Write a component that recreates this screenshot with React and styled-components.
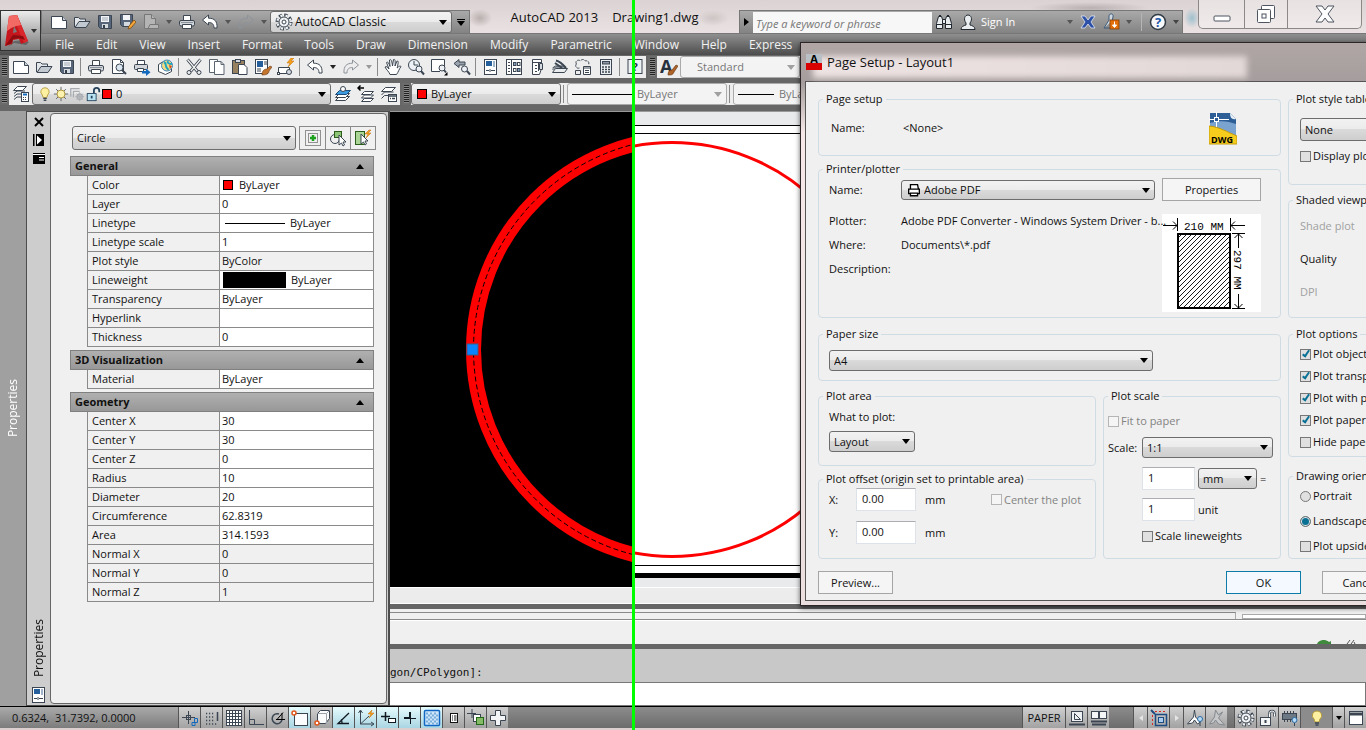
import React from "react";
import styled, { createGlobalStyle, css } from "styled-components";

const ink = "#3b4652";

/* every toolbar drawing sits on an 18 x 18 grid */
const glyphs = {
  page: (
    <g fill="#fff" stroke={ink}>
      <path d="M1.500 3.500h11l4 4v8h-15z" />
      <path d="M12.500 3.500v4h4" fill="#c9ced6" />
    </g>
  ),
  open: (
    <g stroke={ink} strokeLinejoin="round">
      <path d="M1.500 14V4.500h4l1.500 1.500h5.500v3" fill="#e4e7ea" />
      <path d="M2 14.500l4-6h11l-4 6z" fill="#c3c9d0" />
    </g>
  ),
  save: (
    <g>
      <path d="M2.500 2.500h13v13h-11l-2-2z" fill="#56657a" stroke={ink} />
      <rect x="5" y="3" width="8" height="6" fill="#f2f4f7" />
      <path d="M6 5h6M6 7h6" stroke="#9fa8b3" />
      <rect x="6" y="11" width="6" height="4" fill="#d5dae1" />
      <rect x="7" y="12" width="2" height="3" fill="#333c49" />
    </g>
  ),
  saveAs: (
    <g>
      <path d="M1.500 1.500h12v12h-10l-2-2z" fill="#56657a" stroke={ink} />
      <rect x="4" y="2" width="7" height="5" fill="#f2f4f7" />
      <rect x="5" y="9" width="6" height="4" fill="#d5dae1" />
      <path d="M9 16l1-3 5-6 2 2-5 6z" fill="#f6a73b" stroke="#7d4d10" strokeWidth=".8" />
    </g>
  ),
  plotPage: (
    <g fill="#b4b4b4" stroke="#777">
      <path d="M2.500 1.500h7l4 4v10h-11z" />
      <path d="M9.500 1.500v4h4" />
      <path d="M8 11.500h8.500v4H6z" />
    </g>
  ),
  print: (
    <g stroke={ink}>
      <path d="M5.500 7.500v-5h7v5" fill="#fff" />
      <rect x="1.500" y="7.500" width="15" height="5.500" rx="1.500" fill="#d2d6da" />
      <path d="M4.500 11.500h9v4h-9z" fill="#fff" />
      <path d="M3 9.500h12" stroke="#8b939c" />
    </g>
  ),
  printCheck: (
    <g stroke={ink}>
      <path d="M2.500 1.500h8l3 3v11h-11z" fill="#fff" />
      <path d="M10.500 1.500v3h3" fill="none" />
      <circle cx="9.500" cy="9.500" r="3.500" fill="#dbe7f0" />
      <path d="M12 12l4 4" strokeWidth="2" />
    </g>
  ),
  publish: (
    <g stroke={ink}>
      <path d="M4.500 6V2.500h7V6" fill="#fff" />
      <rect x="1.500" y="6.500" width="13" height="5" rx="1" fill="#d2d6da" />
      <path d="M4.500 10.500h6v3h-6z" fill="#fff" />
      <path d="M9 13h4v-2.500l4.500 3.800-4.500 3.700v-2.500H9z" fill="#1269bd" stroke="none" />
    </g>
  ),
  globe: (
    <g>
      <path d="M2.500 6.500l5-3 8 2v8l-6 3-7-3z" fill="#fff" stroke={ink} />
      <circle cx="11" cy="7.500" r="5.500" fill="#f2d982" stroke="#3d86b9" />
      <path d="M8 4c2 1 2 2 2 4s2 2 2 4M12 3c-1 2 1 3 4 3" fill="none" stroke="#1fa5c0" strokeWidth="2" />
      <path d="M13 7l3 1-2 3z" fill="#d9431e" />
    </g>
  ),
  cut: (
    <g stroke={ink} fill="none">
      <path d="M2.500 1.500l10 12M15.500 1.500l-10 12" strokeWidth="3" />
      <path d="M2.500 1.500l10 12M15.500 1.500l-10 12" stroke="#f4f4f4" strokeWidth="1.200" />
      <circle cx="4" cy="14.500" r="2" />
      <circle cx="14" cy="14.500" r="2" />
    </g>
  ),
  copy: (
    <g fill="#fff" stroke="#5a6570">
      <path d="M1.500 1.500h8v13h-8z" />
      <path d="M6.500 3.500h6.500l3 3v10H6.500z" />
      <path d="M13 3.500v3h3" fill="none" />
    </g>
  ),
  paste: (
    <g stroke={ink}>
      <rect x="1.500" y="2.500" width="12" height="13" fill="#97815f" />
      <rect x="4.500" y="1.500" width="5" height="3" fill="#d6d9dd" />
      <path d="M7.500 6.500h5.500l3 3v7H7.500z" fill="#fff" />
    </g>
  ),
  match: (
    <g>
      <rect x="1.500" y="1.500" width="12" height="14" fill="#fff" stroke={ink} />
      <rect x="3" y="3" width="6" height="6" fill="#245f9c" />
      <path d="M10 4h3M10 6h3M3 11h4M3 13h4" stroke={ink} />
      <path d="M8 17c0-4 2-6 5-6l3-3 2 1-3 4c0 3-3 4-7 4z" fill="#c3752e" stroke="#6c3a12" strokeWidth=".6" />
    </g>
  ),
  blockEdit: (
    <g stroke={ink}>
      <path d="M1.500 15.500v-6h11v6z" fill="#fff" />
      <circle cx="12" cy="14" r="2.500" fill="#d5dae1" />
      <rect x="0.500" y="14.500" width="2" height="2" fill="#fff" />
      <path d="M14 0l-4 5h3l-2 4 6-6h-3l3-3z" fill="#f6a01e" stroke="#c06f08" strokeWidth=".5" />
    </g>
  ),
  undo: (
    <path d="M1.500 7l6-5v3.200c6 0 9 3 8.500 9.800h-3c0-4-2-5.500-5.500-5.500V12z" fill="#fff" stroke={ink} strokeLinejoin="round" />
  ),
  redo: (
    <path d="M16.500 7l-6-5v3.200c-6 0-9 3-8.500 9.800h3c0-4 2-5.500 5.500-5.500V12z" fill="none" stroke="#8e949b" strokeLinejoin="round" />
  ),
  hand: (
    <path
      d="M6 16.500c-1-3-3.500-4.500-5-7.500 1.500-1 2.500 0 4 2L2.500 4.500c1-1 2-.5 3.500 4L5.500 2c1.200-1 2.200-.5 3 6l1-6.500c1.500-.5 2 .5 1.500 6.500l2-5c1.500-.2 1.500 1 .2 7 1.800-2 2.800-2.200 3.800-1.500-2 2.500-2.500 5.500-4.500 8z"
      fill="#fff" stroke={ink} strokeLinejoin="round"
    />
  ),
  zoomLive: (
    <g stroke={ink} fill="#eef2f6">
      <circle cx="7" cy="7" r="5.500" />
      <path d="M7 3v4h4" fill="none" />
      <circle cx="12" cy="11" r="3" />
      <path d="M14 13l3 3.500" strokeWidth="2" />
    </g>
  ),
  zoomWindow: (
    <g stroke={ink}>
      <path d="M10 13.500H1.500v-12h13V8" fill="#fff" />
      <circle cx="12" cy="10" r="3" fill="#eef2f6" />
      <path d="M14 12l2 2.500" strokeWidth="2" />
      <path d="M17.500 14v3.500H14z" fill="#000" stroke="none" />
    </g>
  ),
  zoomPrev: (
    <g stroke={ink}>
      <path d="M1 5.500l5-4v2.500h6v3H6v2.500z" fill="#9aa3ad" />
      <circle cx="11.500" cy="11" r="3" fill="#eef2f6" />
      <path d="M14 13l3 3.500" strokeWidth="2" />
    </g>
  ),
  props: (
    <g>
      <rect x="2.500" y="1.500" width="12" height="15" fill="#fff" stroke={ink} />
      <rect x="4" y="3" width="6" height="5" fill="#245f9c" />
      <path d="M12 3v6" stroke="#9fb4c8" strokeWidth="2" />
      <path d="M4 12.500h3M9 12.500h4M8 11v3" stroke={ink} />
    </g>
  ),
  designCenter: (
    <g fill="#fff" stroke={ink}>
      <rect x="1.500" y="1.500" width="15" height="15" />
      <path d="M6.500 1.500v15M3 4.500h2M3 7.500h2M3 10.500h2M3 13.500h2" />
      <rect x="8.500" y="4.500" width="2.500" height="3" fill="#7ea0c0" />
      <rect x="12.500" y="4.500" width="2.500" height="3" />
      <rect x="8.500" y="10.500" width="2.500" height="3" />
      <rect x="12.500" y="10.500" width="2.500" height="3" fill="#7ea0c0" />
    </g>
  ),
  toolPalette: (
    <g fill="#fff" stroke={ink}>
      <path d="M4.500 1.500h9v9l-2 6h-7z" />
      <path d="M4.500 4.500h9M10.500 5v8M7 7.500h2M7 10.500h2M7 13.500h2" />
      <path d="M11.500 5.500h3v6h-3z" fill="#d5dae1" />
    </g>
  ),
  sheetSet: (
    <g stroke={ink} fill="#e9ecef" strokeLinejoin="round">
      <path d="M1.500 14.500l3-4h12l-3 4z" />
      <path d="M1.500 12l3-3h10M1.500 10l3-2h9" fill="none" />
      <path d="M5 2.500c4 1 7 4 10 7.500M4 5l7 5" strokeWidth="2" />
    </g>
  ),
  markup: (
    <g stroke={ink} fill="none">
      <path d="M2.500 6c-2-3 2-5 4-3 1-2 4-2 5 0 3-1 4 2 3 4M2.500 6c-2 2 0 5 3 4" strokeDasharray="3 1" />
      <path d="M9.500 8.500h7v8h-7z" fill="#fff" />
      <path d="M9.500 10h7M11 12.500h4M11 14.500h4M1.500 12.500h5v4h-5z" />
    </g>
  ),
  calc: (
    <g stroke={ink}>
      <rect x="3.500" y="1.500" width="11" height="15" fill="#eceff2" />
      <rect x="5.500" y="3.500" width="7" height="2.500" fill="#8d98a4" />
      <path d="M5 9h8M5 11.500h8M5 14h8" strokeWidth="1.500" strokeDasharray="2 1" />
    </g>
  ),
  help: (
    <g>
      <rect x="2" y="1.500" width="14" height="14" fill="#eef1f4" stroke={ink} />
      <text x="9" y="13" fontSize="11" fontWeight="700" textAnchor="middle" fill="#26313d">?</text>
    </g>
  ),
  textStyle: (
    <g>
      <text x="0" y="15" fontSize="18" fontWeight="700" fill="#26313d">A</text>
      <path d="M8 17c0-3 1-5 4-5l4-5 2 1-4 6c-1 3-3 3-6 3z" fill="#b06328" stroke="#5d300e" strokeWidth=".6" />
    </g>
  ),
  layers: (
    <g stroke={ink} fill="#fff">
      <path d="M2 14.500l3-2.500h9M2 11.500l3-2.500h9M2 8.500l3-2.500h8" fill="none" />
      <path d="M1.500 5.500l4-4h9l-4 4z" />
      <rect x="9.500" y="7.500" width="7" height="9" />
      <path d="M11 9.500h4" stroke="#1269bd" strokeWidth="2" />
      <path d="M11 12.500h4M11 14.500h4" strokeDasharray="1 1" />
    </g>
  ),
  layerCurrent: (
    <g stroke={ink} fill="#fff">
      <path d="M1.500 15.500l4-4h10l-4 4z" />
      <path d="M1.500 12.500l4-4h10l-4 4z" />
      <path d="M1.500 9.500l4-4h11l-4 4z" fill="#3f9be0" stroke="#1a4c7c" />
      <circle cx="9" cy="4" r="2.500" />
    </g>
  ),
  layerPrev: (
    <g stroke={ink} fill="#fff">
      <path d="M4.500 16.500l3-3h9l-3 3z" />
      <path d="M4.500 13l3-3h9l-3 3z" />
      <path d="M4.500 9.500l3-3h9l-3 3z" />
      <path d="M1 3h6M3.500 .5L1 3l2.500 2.500" fill="none" stroke="#000" strokeWidth="1.500" />
    </g>
  ),
  layerStates: (
    <g stroke={ink} fill="#fff">
      <path d="M1.500 13.500l3-3h9M1.500 10l3-3h9" fill="none" />
      <path d="M1.500 6.500l4-4h10l-4 4z" />
      <rect x="8.500" y="9.500" width="8" height="7" />
      <path d="M8.500 11h8M10 13.500h1M12 13.500h3" strokeWidth="1.500" />
    </g>
  ),
  bulb: (
    <g>
      <path d="M9 2a4.500 4.500 0 0 0-3 8l1 3h4l1-3a4.500 4.500 0 0 0-3-8z" fill="#fdf0a0" stroke="#b39a3c" />
      <path d="M7 14h4M7.500 16h3" stroke={ink} strokeWidth="1.500" />
    </g>
  ),
  sun: (
    <g stroke="#565f67">
      <path d="M9 1v16M1 9h16M3.500 3.500l11 11M14.500 3.500l-11 11" />
      <circle cx="9" cy="9" r="4.500" fill="#fdf2b0" stroke="#a88d34" />
    </g>
  ),
  freeze: (
    <g stroke="#a9adb1" fill="none" strokeWidth="1.500">
      <path d="M2 12V3h10M5 13V6h7" />
      <circle cx="12" cy="12" r="3" />
      <path d="M12 7v10M7 12h10M8.500 8.500l7 7M15.500 8.500l-7 7" strokeWidth="1" />
    </g>
  ),
  lock: (
    <g stroke="#25435d">
      <path d="M10 8V5a3 3 0 0 1 6 0v2" fill="none" strokeWidth="2" />
      <rect x="2.500" y="8.500" width="10" height="8" fill="#b9e3f3" />
      <path d="M7.500 11v3" strokeWidth="2" />
    </g>
  ),
  lockUi: (
    <g stroke={ink}>
      <path d="M10.500 8V4.500a2.500 2.500 0 0 1 5 0v3" fill="none" strokeWidth="2.500" />
      <path d="M10.500 8V4.500a2.500 2.500 0 0 1 5 0v3" fill="none" stroke="#fff" strokeWidth="1" />
      <rect x="1.500" y="8.500" width="10" height="8" fill="#f4f5f6" />
      <path d="M6.500 11v3" strokeWidth="2" />
    </g>
  ),
  gear: (
    <g fill="none" stroke={ink}>
      <circle cx="9" cy="9" r="7" strokeWidth="3" strokeDasharray="3.500 2" />
      <circle cx="9" cy="9" r="6.500" stroke="#f1f3f5" strokeWidth="2.500" strokeDasharray="2 3.100" strokeDashoffset="-.8" />
      <circle cx="9" cy="9" r="5" fill="#f1f3f5" />
      <circle cx="9" cy="9" r="2" fill="#fff" />
    </g>
  ),
  binoculars: (
    <g fill="#e8ecef" stroke="#20272f">
      <path d="M1.500 15.500v-5l2-7h3l1 3v9zM16.500 15.500v-5l-2-7h-3l-1 3v9z" />
      <path d="M7.500 6.500h3v4h-3zM1.500 11.500h6M10.500 11.500h6M4 2.500h2M12 2.500h2" />
    </g>
  ),
  person: (
    <g fill="#e9edf0" stroke="#20272f">
      <path d="M2 16.500c0-3 3-4 5-4.500v-2c-3-4-1-8 2-8s5 4 2 8v2c2 .5 5 1.500 5 4.500z" />
    </g>
  ),
  exchange: (
    <path d="M2 3h4l3 4 3-4h4l-4 6 4 6h-4l-3-4-3 4H2l4-6z" fill="#2b50a5" stroke="#e3e8f5" strokeWidth=".8" />
  ),
  update: (
    <g>
      <path d="M2 15l5-8V3c0-3 5-3 4 1l-1 4M2 15h6" fill="#cfd7df" stroke="#3f5c7c" />
      <rect x="8" y="7" width="9" height="9" fill="#e46f0a" stroke="#843f03" strokeWidth=".8" />
      <path d="M12.500 8.500v4M10.500 12l2 2.500 2-2.500z" fill="#fff" stroke="#fff" />
    </g>
  ),
  about: (
    <g>
      <circle cx="9" cy="9" r="7.500" fill="#f6f8fa" stroke="#303a44" strokeWidth="1.500" />
      <text x="9" y="14" fontSize="13" fontWeight="700" textAnchor="middle" fill="#1c56a8">?</text>
    </g>
  ),
  pickAdd: (
    <g>
      <path d="M1.500 1.500h15v15h-15zM4.500 4.500h9v9h-9z" fill="none" stroke="#333" strokeDasharray="1 1" />
      <path d="M9 6v6M6 9h6" stroke="#1ba11b" strokeWidth="2.500" />
    </g>
  ),
  selectObjects: (
    <g>
      <circle cx="6" cy="10" r="4.500" fill="none" stroke={ink} />
      <rect x="5.500" y="2.500" width="7" height="6" fill="#8dc476" stroke="#2a5e1a" />
      <path d="M10 6v10l2.500-2 1.500 3 1.500-1-1.500-3h3z" fill="#fff" stroke={ink} />
    </g>
  ),
  quickSelect: (
    <g>
      <rect x="1.500" y="2.500" width="9" height="13" fill="#abd497" stroke="#2a5e1a" />
      <path d="M7 5v10l2.500-2 1.500 3 1.500-1-1.500-3h3z" fill="#fff" stroke={ink} />
      <path d="M15 1l-4 4h3l-2 4 5-5h-3l3-3z" fill="#f6a01e" stroke="#c06f08" strokeWidth=".5" />
    </g>
  ),
  infer: (
    <g fill="none" stroke={ink}>
      <path d="M1 8.500h13M7.500 2v13" />
      <rect x="5.500" y="6.500" width="4" height="4" />
      <path d="M11 13.500h3v3h-3zM13.500 13.500v-4h3v4z" stroke="#1269bd" />
    </g>
  ),
  snap: (
    <g stroke={ink} fill="none" strokeWidth="1.500">
      <path d="M3 4.500h9M3 8h9M3 11.500h9M3 15h12" strokeDasharray="1.200 1.800" />
      <path d="M14.500 3v9" />
    </g>
  ),
  grid: (
    <g>
      <rect x="1.500" y="1.500" width="15" height="15" fill="#fff" stroke={ink} />
      <path d="M4.500 1v16M7.500 1v16M10.500 1v16M13.500 1v16M1 4.500h16M1 7.500h16M1 10.500h16M1 13.500h16" stroke={ink} />
    </g>
  ),
  ortho: <path d="M2.500 1v14.500H17M2.500 10.500h5v5" fill="none" stroke={ink} />,
  polar: (
    <g fill="none" stroke={ink}>
      <path d="M13 11a5 5 0 1 1-3-6" strokeWidth="1.500" />
      <path d="M7 10.500h9M8 10.500l6-7M13 4v6" stroke="#000" />
    </g>
  ),
  osnap: (
    <g>
      <rect x="3.500" y="4.500" width="13" height="12" fill="#fbfcfd" stroke={ink} />
      <circle cx="3" cy="4" r="2" fill="#fff" stroke="#e3571b" strokeWidth="1.500" />
    </g>
  ),
  osnap3d: (
    <g>
      <path d="M4.500 4.500l3-3h9v8l-4 5h-8z" fill="#fbfcfd" stroke={ink} />
      <path d="M4.500 4.500h9v10M13.500 4.500l3-3" fill="none" stroke="#9aa3ad" />
      <circle cx="4" cy="14" r="2" fill="#fff" stroke="#e3571b" strokeWidth="1.500" />
    </g>
  ),
  otrack: <path d="M14 4L3 14.500h11M7 14c0-2 0-3-1-3.500" fill="none" stroke="#101820" strokeWidth="1.300" />,
  ducs: (
    <g>
      <path d="M3.500 2v13h13M1.500 4l2-3 2 3M14 13l3 2-3 2M3.500 15L12 7" fill="none" stroke={ink} />
      <path d="M15 1l-4 4h3l-2 4 5-5h-3z" fill="#f6a01e" stroke="#c06f08" strokeWidth=".5" />
    </g>
  ),
  dyn: (
    <g fill="none" stroke="#101820">
      <path d="M2 7.500h9M6.500 3v9" strokeWidth="1.500" />
      <rect x="9.500" y="9.500" width="7" height="4" fill="#fff" />
    </g>
  ),
  lwt: (
    <g stroke="#101820">
      <path d="M3 9h6M9 3v6" strokeWidth="2" />
      <path d="M9 9.500h6M9.500 9v6" />
    </g>
  ),
  transparency: (
    <g>
      <rect x="1.500" y="1.500" width="15" height="15" rx="1" fill="#cfe6fa" stroke="#1167c2" strokeWidth="1.500" />
      <path d="M3 4.500h12M3 8.500h12M3 12.500h12" stroke="#79aedb" strokeWidth="2" strokeDasharray="2 2" />
      <path d="M5 6.500h10M5 10.500h10M5 14.500h10" stroke="#79aedb" strokeWidth="2" strokeDasharray="2 2" />
    </g>
  ),
  quickProps: (
    <g>
      <rect x="5.500" y="4.500" width="7" height="9" fill="#fff" stroke="#111" />
      <path d="M7 7h1M9 7h2.500M7 9h1M9 9h2.500M7 11h1M9 11h2.500" stroke="#111" />
    </g>
  ),
  cycling: (
    <g stroke={ink}>
      <path d="M5 0v9M0 4.500h9" />
      <rect x="6.500" y="5.500" width="7" height="7" fill="#fff" />
      <rect x="9.500" y="8.500" width="7" height="7" fill="#85bb66" stroke="#24681a" />
    </g>
  ),
  monitor: <path d="M6.500 1.500h5v5h5v5h-5v5h-5v-5h-5v-5h5z" fill="#f4f5f6" stroke={ink} />,
  modelSpace: (
    <g stroke={ink} fill="#eef1f4">
      <rect x="3.500" y="2.500" width="11" height="10" />
      <path d="M6.500 4.500v6h6z" fill="none" />
      <path d="M1 15.500h16" strokeWidth="2" />
    </g>
  ),
  layouts: (
    <g stroke={ink} fill="#f4f5f6">
      <rect x="1.500" y="2.500" width="7" height="7" />
      <rect x="9.500" y="2.500" width="7" height="7" />
      <path d="M1 12.500h16M2 15.500h14" strokeWidth="2" />
    </g>
  ),
  viewport: (
    <g fill="none">
      <path d="M2.500 16V2.500H17" stroke="#d62a2a" strokeDasharray="2 2" />
      <rect x="5.500" y="5.500" width="11" height="11" stroke="#1c4c80" strokeWidth="1.500" />
      <rect x="8.500" y="8.500" width="5" height="5" fill="#a9cdf0" stroke="#1c4c80" />
      <path d="M1 1l4 4" stroke="#1c4c80" strokeWidth="2" />
    </g>
  ),
  annoVisible: (
    <g stroke={ink} fill="#fff">
      <path d="M8.500 1l-1 7-6 7 5-1 2-3 3 4 3-2-5-5z" />
      <circle cx="14" cy="10" r="2.500" fill="#b6d9f5" stroke="#2b6ca6" />
      <path d="M14 13v4" />
    </g>
  ),
  annoAuto: (
    <g stroke="#84898e" fill="#c6c8ca">
      <path d="M7.500 1l-1 7-5 7 4-1 2-3 3 4 6 1-6-7 4-6-4 3z" />
    </g>
  ),
  hardware: (
    <g stroke={ink}>
      <rect x="1.500" y="4.500" width="14" height="6" fill="#6c7883" />
      <path d="M3 3h12M3 12h8" strokeWidth="2" strokeDasharray="1 2" />
      <circle cx="13.500" cy="11" r="2.500" fill="#b6d9f5" stroke="#2b6ca6" />
      <path d="M13.500 14v3" />
    </g>
  ),
  cleanScreen: (
    <g stroke={ink}>
      <rect x="2.500" y="2.500" width="13" height="13" fill="#fff" />
      <path d="M2.500 5h13" strokeWidth="3" />
    </g>
  ),
  plainPrinter: (
    <g stroke="#000" fill="#fff" strokeWidth="1.500">
      <path d="M5 8V3h8l1 5" />
      <path d="M3 8h12v5H3z" />
      <path d="M5 12.500h8v3H5z" />
    </g>
  ),
};

function Icon({ name, size = 18 }) {
  return (
    <svg width={size} height={size} viewBox="0 0 18 18" aria-hidden="true">
      {glyphs[name]}
    </svg>
  );
}

function Combo({ label, width, height, lead, value, muted, large }) {
  return (
    <ComboFrame $w={width} $h={height} $muted={muted}>
      {lead}
      <ComboSelect aria-label={label} defaultValue={value} $muted={muted} $large={large}>
        <option>{value}</option>
      </ComboSelect>
      <Caret $tone={muted ? "#a0a0a0" : "#000"} />
    </ComboFrame>
  );
}

function Check({ children, ...rest }) {
  return (
    <CheckLabel $off={rest.disabled}>
      <CheckBox type="checkbox" {...rest} />
      {children}
    </CheckLabel>
  );
}

const menus = ["File", "Edit", "View", "Insert", "Format", "Tools", "Draw", "Dimension", "Modify", "Parametric", "Window", "Help", "Express"];

const standardTools = [
  "page", "open", "save", "|",
  "print", "printCheck", "publish", "globe", "|",
  "cut", "copy", "paste", "match", "blockEdit", "|",
  "undo", "v", "redo", "v-", "|",
  "hand", "zoomLive", "zoomWindow", "zoomPrev", "|",
  "props", "designCenter", "toolPalette", "sheetSet", "markup", "calc", "|",
  "help",
];

const quickTools = ["page", "open", "save", "saveAs", "plotPage", "v", "print", "undo", "v", "redo", "v"];

const sections = [
  {
    title: "General",
    rows: [
      ["Color", "ByLayer", "swatch"],
      ["Layer", "0"],
      ["Linetype", "ByLayer", "line"],
      ["Linetype scale", "1"],
      ["Plot style", "ByColor", null, true],
      ["Lineweight", "ByLayer", "weight"],
      ["Transparency", "ByLayer"],
      ["Hyperlink", ""],
      ["Thickness", "0"],
    ],
  },
  { title: "3D Visualization", rows: [["Material", "ByLayer"]] },
  {
    title: "Geometry",
    rows: [
      ["Center X", "30"],
      ["Center Y", "30"],
      ["Center Z", "0"],
      ["Radius", "10"],
      ["Diameter", "20"],
      ["Circumference", "62.8319"],
      ["Area", "314.1593"],
      ["Normal X", "0", null, true],
      ["Normal Y", "0", null, true],
      ["Normal Z", "1", null, true],
    ],
  },
];

const statusToggles = [
  ["infer"], ["snap"], ["grid"], ["ortho"], ["polar"],
  ["osnap", true], ["osnap3d"], ["otrack", true], ["ducs", true], ["dyn", true],
  ["lwt", true], ["transparency", true], ["quickProps"], ["cycling"], ["monitor"],
];

function Tools({ items, tone }) {
  return items.map((item, i) => {
    if (item === "|") return <Divider key={i} />;
    if (item[0] === "v") {
      return (
        <CaretButton key={i} aria-label="More">
          <Caret $small $tone={item === "v-" ? "#999" : tone} />
        </CaretButton>
      );
    }
    return (
      <ToolButton key={i} aria-label={item}>
        <Icon name={item} />
      </ToolButton>
    );
  });
}

function TitleBar() {
  return (
    <TitleRow>
      <AppButton aria-label="Application menu">
        <svg width="26" height="34" viewBox="0 0 26 34" aria-hidden="true">
          <path d="M4 33l6-4 12 2 3-3-6-2-9 1z" fill="#3a3a3a" opacity=".5" />
          <path d="M5 2l8-1 11 26-7 3-2-5-6 1-1 4-7 2z" fill="#c4161c" />
          <path d="M13 1l11 26-4 2L9 3z" fill="#d9272b" />
          <path d="M5 2l8-1 4 10c-5 1-9 2-14 6z" fill="#f26a63" />
          <path d="M1 32l8-11 10 1 2 4-6-2-6 1-1 4z" fill="#8c0c10" />
          <path d="M9 19l1-7 3 6z" fill="#7c7c7c" />
        </svg>
        <Caret $small $tone="#333" />
      </AppButton>
      <QuickAccess>
        <Tools items={quickTools} tone="#555" />
        <Combo label="Workspace" width={182} height={22} lead={<Icon name="gear" />} value="AutoCAD Classic" large />
        <OverflowButton aria-label="Customize quick access"><Bar /><Caret $tone="#000" /></OverflowButton>
      </QuickAccess>
      <WindowTitle>
        <span>AutoCAD 2013</span>
        <span>Drawing1.dwg</span>
      </WindowTitle>
      <InfoCenter>
        <SearchArrow aria-label="Hide search">
          <svg width="5" height="8" viewBox="0 0 5 8"><path d="M0 0l5 4-5 4z" /></svg>
        </SearchArrow>
        <SearchBox aria-label="Search" placeholder="Type a keyword or phrase" />
        <ToolButton aria-label="Search"><Icon name="binoculars" /></ToolButton>
        <SignIn><Icon name="person" />Sign In</SignIn>
        <CaretButton aria-label="Account"><Caret $small $tone="#555" /></CaretButton>
        <ToolButton aria-label="Exchange"><Icon name="exchange" /></ToolButton>
        <ToolButton aria-label="Updates"><Icon name="update" /></ToolButton>
        <CaretButton aria-label="More updates"><Caret $small $tone="#555" /></CaretButton>
        <InfoDivider />
        <ToolButton aria-label="Help"><Icon name="about" /></ToolButton>
        <CaretButton aria-label="More help"><Caret $small $tone="#444" /></CaretButton>
      </InfoCenter>
      <WindowButtons>
        <WindowButton $w={45} aria-label="Minimize">
          <svg width="18" height="20" viewBox="0 0 18 20"><rect x="1" y="12" width="16" height="5" rx="1" fill="#fff" stroke="#4d5560" /></svg>
        </WindowButton>
        <WindowButton $w={43} aria-label="Restore">
          <svg width="20" height="20" viewBox="0 0 20 20" fill="#fff" stroke="#4d5560">
            <rect x="5.500" y="1.500" width="13" height="13" rx="1" />
            <rect x="1.500" y="5.500" width="13" height="13" rx="1" />
            <rect x="6" y="10" width="4" height="4" />
          </svg>
        </WindowButton>
        <WindowButton $w={74} aria-label="Close">
          <svg width="20" height="18" viewBox="0 0 20 18"><path d="M1 1h6l3 4 3-4h6l-6 8 6 8h-6l-3-4-3 4H1l6-8z" fill="#fff" stroke="#4d5560" /></svg>
        </WindowButton>
      </WindowButtons>
    </TitleRow>
  );
}

function Palette() {
  return (
    <PaletteFrame>
      <PaletteSpine>
        <SpineButton aria-label="Close palette">
          <svg width="10" height="10" viewBox="0 0 10 10"><path d="M1 1l8 8M9 1L1 9" stroke="#000" strokeWidth="2" /></svg>
        </SpineButton>
        <SpineButton aria-label="Auto-hide">
          <svg width="11" height="12" viewBox="0 0 11 12"><path d="M0 0h1.500v12H0zM3 0h8v12H3z" /><path d="M4 1.500l5 4.500-5 4.500z" fill="#fff" /></svg>
        </SpineButton>
        <SpineButton aria-label="Palette options">
          <svg width="12" height="11" viewBox="0 0 12 11"><path d="M0 0h12v11H0z" /><path d="M0 1.500h12M6 4.500h5M6 7h5" stroke="#fff" /></svg>
        </SpineButton>
        <SpineTitle>Properties</SpineTitle>
        <Icon name="props" />
      </PaletteSpine>
      <PaletteBody>
        <PalettePick>
          <Combo label="Object type" width={224} height={24} value="Circle" />
          <PickGroup>
            <PickButton aria-label="Toggle pickadd"><Icon name="pickAdd" /></PickButton>
            <PickButton aria-label="Select objects"><Icon name="selectObjects" /></PickButton>
            <PickButton aria-label="Quick select"><Icon name="quickSelect" /></PickButton>
          </PickGroup>
        </PalettePick>
        {sections.map((section) => (
          <Section key={section.title}>
            <SectionHead>
              {section.title}
              <svg width="8" height="5" viewBox="0 0 8 5"><path d="M0 5l4-5 4 5z" /></svg>
            </SectionHead>
            <PropTable>
              <tbody>
                {section.rows.map(([name, value, mark, locked]) => (
                  <tr key={name}>
                    <PropName scope="row">{name}</PropName>
                    <PropValue $locked={locked}>
                      <ValueLine>
                        {mark === "swatch" && <Swatch />}
                        {mark === "line" && <LineSample $w={60} />}
                        {mark === "weight" && <WeightSample />}
                        {value}
                      </ValueLine>
                    </PropValue>
                  </tr>
                ))}
              </tbody>
            </PropTable>
          </Section>
        ))}
      </PaletteBody>
    </PaletteFrame>
  );
}

function Drawing() {
  return (
    <DrawingArea>
      <ModelPane>
        <svg width="243" height="475" viewBox="0 0 243 475">
          <circle cx="295" cy="237.500" r="211.500" fill="none" stroke="#f00" strokeWidth="15" />
          <circle cx="295" cy="237.500" r="211.500" fill="none" stroke="#000" strokeDasharray="5 3" />
          <rect x="77" y="232" width="11" height="11" fill="#0a84ff" stroke="#3a5f87" />
        </svg>
      </ModelPane>
      <PaperPane>
        <PaperSheet>
          <PaperMargin>
            <svg width="100%" height="431" viewBox="0 0 733 431" preserveAspectRatio="xMinYMin slice">
              <circle cx="39" cy="215.500" r="207" fill="none" stroke="#f00" strokeWidth="3" />
            </svg>
          </PaperMargin>
        </PaperSheet>
      </PaperPane>
    </DrawingArea>
  );
}

function PaperPreview() {
  return (
    <svg width="99" height="98" viewBox="0 0 99 98" aria-hidden="true">
      <defs>
        <pattern id="hatch" width="5" height="5" patternUnits="userSpaceOnUse">
          <path d="M-1 1l2-2M0 5l5-5M4 6l2-2" stroke="#000" strokeWidth=".9" />
        </pattern>
      </defs>
      <rect width="99" height="98" fill="#fff" />
      <rect x="16" y="20" width="52" height="74" fill="url(#hatch)" stroke="#000" strokeWidth="2" />
      <g fill="none" stroke="#000">
        <path d="M15.500 4v13M68.500 4v13M1 11.500h14M11 7.500l4 4-4 4M83 11.500H69M73 7.500l-4 4 4 4" />
        <path d="M70 19.500h13M70 94.500h13M76.500 20v14M72.500 24l4-4 4 4M76.500 80v14M72.500 90l4 4 4-4" />
      </g>
      <PreviewText x="22" y="16">210 MM</PreviewText>
      <PreviewText x="36" y="-72" transform="rotate(90)">297 MM</PreviewText>
    </svg>
  );
}

function PageSetup() {
  return (
    <Dialog role="dialog" aria-labelledby="setup-title">
      <DialogTitle>
        <svg width="16" height="16" viewBox="0 0 16 16" aria-hidden="true">
          <rect width="16" height="16" fill="#b9c1c7" />
          <rect y="9" width="16" height="7" fill="#d90000" />
          <text x="8" y="9" fontSize="11" fontWeight="700" textAnchor="middle">A</text>
        </svg>
        <span id="setup-title">Page Setup - Layout1</span>
      </DialogTitle>
      <DialogBody>
        <Columns>
          <Column>
            <Group $h={64} $after={6}>
              <legend>Page setup</legend>
              <SetupName>
                <span>Name:</span>
                <span>&lt;None&gt;</span>
                <svg width="28" height="33" viewBox="0 0 28 33" aria-hidden="true">
                  <path d="M1 1h20l6 6v25H1z" fill="#2d5f96" />
                  <path d="M1 14c10 2 18 6 26 12V12c-8-3-16-4-26-1z" fill="#7aa3cf" />
                  <path d="M21 1l6 6c-4 1-6-1-6-6z" fill="#e6eef7" />
                  <path d="M7.500 0v15M0 7.500h20" stroke="#fff" />
                  <rect x="5.500" y="5.500" width="4" height="4" fill="#2d5f96" stroke="#fff" />
                  <path d="M0 14c11 1 18 6 28 10v8H0z" fill="#f6cd1c" stroke="#c59b0c" />
                  <text x="13" y="31" fontSize="9" fontWeight="700" textAnchor="middle">DWG</text>
                </svg>
              </SetupName>
            </Group>
            <Group $h={156} $after={9}>
              <legend>Printer/plotter</legend>
              <PrinterLayout>
                <PrinterFacts>
                  <PrinterRow $first>
                    <span>Name:</span>
                    <Combo label="Printer name" width={254} height={20} lead={<Icon name="plainPrinter" size={16} />} value="Adobe PDF" />
                  </PrinterRow>
                  <PrinterRow><span>Plotter:</span><span>Adobe PDF Converter - Windows System Driver - b...</span></PrinterRow>
                  <PrinterRow><span>Where:</span><span>Documents\*.pdf</span></PrinterRow>
                  <PrinterRow><span>Description:</span></PrinterRow>
                </PrinterFacts>
                <PrinterSide>
                  <PushButton>Properties</PushButton>
                  <PaperPreview />
                </PrinterSide>
              </PrinterLayout>
            </Group>
            <Group $h={54} $after={8}>
              <legend>Paper size</legend>
              <PaperRow><Combo label="Paper size" width={324} height={21} value="A4" /></PaperRow>
            </Group>
            <Halves>
              <Column>
                <Group $h={77} $after={6}>
                  <legend>Plot area</legend>
                  <AreaStack>
                    <span>What to plot:</span>
                    <Combo label="What to plot" width={86} height={21} value="Layout" />
                  </AreaStack>
                </Group>
                <Group $h={87}>
                  <legend>Plot offset (origin set to printable area)</legend>
                  <OffsetGrid>
                    <label htmlFor="off-x">X:</label>
                    <TextBox id="off-x" defaultValue="0.00" />
                    <span>mm</span>
                    <Check disabled>Center the plot</Check>
                    <label htmlFor="off-y">Y:</label>
                    <TextBox id="off-y" defaultValue="0.00" />
                    <span>mm</span>
                  </OffsetGrid>
                </Group>
              </Column>
              <Group $h={170} $tight>
                <legend>Plot scale</legend>
                <ScaleStack>
                  <Check disabled>Fit to paper</Check>
                  <ScaleRow>
                    <ScaleLabel>Scale:</ScaleLabel>
                    <Combo label="Scale" width={131} height={21} value="1:1" />
                  </ScaleRow>
                  <ScaleRow $inset>
                    <TextBox $w={53} aria-label="Paper units" defaultValue="1" />
                    <Combo label="Unit" width={59} height={21} value="mm" />
                    <span>=</span>
                  </ScaleRow>
                  <ScaleRow $inset>
                    <TextBox $w={53} id="units" defaultValue="1" />
                    <label htmlFor="units">unit</label>
                  </ScaleRow>
                  <ScaleCheck><Check>Scale lineweights</Check></ScaleCheck>
                </ScaleStack>
              </Group>
            </Halves>
          </Column>
          <Column>
            <Group $h={93} $after={8}>
              <legend>Plot style table (pen assignments)</legend>
              <StyleStack>
                <Combo label="Plot style table" width={170} height={23} value="None" />
                <Check>Display plot styles</Check>
              </StyleStack>
            </Group>
            <Group $h={125} $after={9}>
              <legend>Shaded viewport options</legend>
              <ShadeStack>
                <Faded>Shade plot</Faded>
                <span>Quality</span>
                <Faded>DPI</Faded>
              </ShadeStack>
            </Group>
            <Group $h={130} $after={12}>
              <legend>Plot options</legend>
              <OptionStack>
                <Check defaultChecked>Plot object lineweights</Check>
                <Check defaultChecked>Plot transparency</Check>
                <Check defaultChecked>Plot with plot styles</Check>
                <Check defaultChecked>Plot paperspace last</Check>
                <Check>Hide paperspace objects</Check>
              </OptionStack>
            </Group>
            <Group $h={90}>
              <legend>Drawing orientation</legend>
              <OptionStack $wide>
                <CheckLabel><Radio type="radio" name="orientation" />Portrait</CheckLabel>
                <CheckLabel><Radio type="radio" name="orientation" defaultChecked />Landscape</CheckLabel>
                <Check>Plot upside-down</Check>
              </OptionStack>
            </Group>
          </Column>
        </Columns>
        <DialogFooter>
          <PushButton $w={75}>Preview...</PushButton>
          <FooterActions>
            <PushButton $w={75} $primary>OK</PushButton>
            <PushButton $w={75}>Cancel</PushButton>
          </FooterActions>
        </DialogFooter>
      </DialogBody>
    </Dialog>
  );
}

function StatusBar() {
  return (
    <StatusRow>
      <Coordinates>0.6324,&nbsp; 31.7392, 0.0000</Coordinates>
      {statusToggles.map(([name, on]) => (
        <StatusButton key={name} aria-label={name} aria-pressed={!!on} $on={on}><Icon name={name} /></StatusButton>
      ))}
      <StatusSpace />
      <StatusButton $w={43}>PAPER</StatusButton>
      <StatusButton aria-label="Model"><Icon name="modelSpace" /></StatusButton>
      <StatusButton aria-label="Layouts"><Icon name="layouts" /></StatusButton>
      <StatusGap $w={24} />
      <StatusButton $w={14} aria-label="Previous viewport"><Chevron width="4" height="6" viewBox="0 0 4 6"><path d="M4 0v6L0 3z" /></Chevron></StatusButton>
      <StatusButton aria-label="Maximize viewport"><Icon name="viewport" /></StatusButton>
      <StatusButton $w={14} aria-label="Next viewport"><Chevron width="4" height="6" viewBox="0 0 4 6"><path d="M0 0v6l4-3z" /></Chevron></StatusButton>
      <StatusButton aria-label="Annotation visibility"><Icon name="annoVisible" /></StatusButton>
      <StatusButton aria-label="Annotation scale"><Icon name="annoAuto" /></StatusButton>
      <StatusGap $w={7} />
      <StatusButton aria-label="Workspace switching"><Icon name="gear" /></StatusButton>
      <StatusButton aria-label="Toolbar lock"><Icon name="lockUi" /></StatusButton>
      <StatusButton aria-label="Hardware acceleration"><Icon name="hardware" /></StatusButton>
      <StatusButton $w={32} $sunk aria-label="Isolate objects"><Icon name="bulb" /></StatusButton>
      <StatusButton $w={12} aria-label="Status bar menu"><Caret $small $tone="#000" /></StatusButton>
      <StatusButton aria-label="Clean screen"><Icon name="cleanScreen" /></StatusButton>
    </StatusRow>
  );
}

export default function App() {
  return (
    <Screen>
      <GlobalStyle />
      <TitleBar />
      <MenuBar>
        {menus.map((menu) => <MenuItem key={menu}>{menu}</MenuItem>)}
      </MenuBar>
      <ToolArea>
        <ToolRow>
          <Toolbar>
            <Grip />
            <Tools items={standardTools} tone="#222" />
          </Toolbar>
          <Toolbar $grow>
            <Grip />
            <ToolButton aria-label="Text style"><Icon name="textStyle" /></ToolButton>
            <Combo label="Text style" width={120} height={22} lead={<LeadSpace />} value="Standard" muted />
          </Toolbar>
        </ToolRow>
        <ToolRow>
          <Toolbar>
            <Grip />
            <ToolButton aria-label="Layer properties"><Icon name="layers" /></ToolButton>
            <Combo
              label="Layer"
              width={299}
              height={22}
              lead={
                <LayerMarks>
                  <Icon name="bulb" size={16} />
                  <Icon name="sun" size={16} />
                  <Icon name="freeze" size={16} />
                  <Icon name="lock" size={16} />
                  <Swatch />
                </LayerMarks>
              }
              value="0"
            />
            <ToolButton aria-label="Make current"><Icon name="layerCurrent" /></ToolButton>
            <ToolButton aria-label="Layer previous"><Icon name="layerPrev" /></ToolButton>
            <ToolButton aria-label="Layer states"><Icon name="layerStates" /></ToolButton>
          </Toolbar>
          <Toolbar $grow>
            <Grip />
            <Combo label="Color" width={150} height={22} lead={<Swatch />} value="ByLayer" />
            <Divider />
            <Combo label="Linetype" width={160} height={22} lead={<LineSample $w={60} />} value="ByLayer" muted />
            <Divider />
            <Combo label="Lineweight" width={160} height={22} lead={<LineSample $w={36} />} value="ByLayer" muted />
          </Toolbar>
        </ToolRow>
      </ToolArea>
      <Main>
        <DockStrip><DockTitle>Properties</DockTitle></DockStrip>
        <Palette />
        <Workspace>
          <Drawing />
          <ScrollStrip />
          <Splitter />
          <DockedTools>
            <DockedLine><LongRail /><ShortRail /></DockedLine>
            <TrayIcons>
              <svg width="42" height="4" viewBox="0 0 42 4" aria-hidden="true">
                <path d="M1 4c2-5 9-5 12-2l2-1v3z" fill="#3f8a3c" />
                <path d="M31 4l3-4M35 4l3-4M39 4l-1-2" stroke="#555" />
              </svg>
            </TrayIcons>
          </DockedTools>
          <Splitter />
          <CommandHistory><HistoryText>gon/CPolygon]:</HistoryText></CommandHistory>
          <CommandInput aria-label="Command" />
        </Workspace>
      </Main>
      <StatusBar />
      <DesktopEdge />
      <PageSetup />
      <CompareLine />
    </Screen>
  );
}

const GlobalStyle = createGlobalStyle`
  body {
    margin: 0;
    overflow: hidden;
  }
  *, *::before, *::after {
    box-sizing: border-box;
  }
  body, button, input, select, legend {
    font-family: "Open Sans", "Noto Sans", sans-serif;
    font-size: 11px;
    line-height: 14px;
    color: #111;
  }
  button {
    padding: 0;
    border: 0;
    background: none;
  }
  svg {
    display: block;
    flex-shrink: 0;
  }
`;

const Screen = styled.div`
  position: relative;
  display: flex;
  flex-direction: column;
  height: 100vh;
  overflow: hidden;
  background: #676767;
`;

const Caret = styled.span`
  flex-shrink: 0;
  width: 0;
  border: ${({ $small }) => ($small ? 3 : 4)}px solid transparent;
  border-top: ${({ $small }) => ($small ? 4 : 5)}px solid ${({ $tone }) => $tone};
  border-bottom: 0;
  pointer-events: none;
`;

const ComboFrame = styled.div`
  display: flex;
  align-items: center;
  flex-shrink: 0;
  gap: 2px;
  width: ${({ $w }) => $w}px;
  height: ${({ $h }) => $h}px;
  padding: 0 4px;
  border: 1px solid ${({ $muted }) => ($muted ? "#aaa" : "#6d6d6d")};
  border-radius: 3px;
  background: ${({ $muted }) => ($muted ? "#f3f3f3" : "linear-gradient(#f2f2f2 0%, #ebebeb 49%, #dadada 50%, #cecece 100%)")};
`;

const ComboSelect = styled.select`
  flex: 1;
  min-width: 0;
  padding: 0;
  border: 0;
  background: transparent;
  appearance: none;
  color: ${({ $muted }) => ($muted ? "#777" : "#111")};
  ${({ $large }) => $large && css`
    font-size: 12px;
  `}
`;

const ToolButton = styled.button`
  display: flex;
  align-items: center;
  justify-content: center;
  flex-shrink: 0;
  width: 23px;
  height: 22px;
`;

const CaretButton = styled(ToolButton)`
  width: 13px;
`;

const Divider = styled.span`
  flex-shrink: 0;
  width: 1px;
  height: 18px;
  margin: 0 3px 0 2px;
  background: #8a8a8a;
`;

const TitleRow = styled.header`
  position: relative;
  display: flex;
  align-items: flex-end;
  flex-shrink: 0;
  height: 34px;
  padding-left: 41px;
  border-bottom: 1px solid #777;
  background:
    radial-gradient(ellipse 12px 9px at 480px 18px, #b9afaf, transparent),
    radial-gradient(ellipse 16px 8px at 713px 18px, #cdc4c4, transparent),
    radial-gradient(ellipse 60px 6px at 1090px 8px, #b9b1b1, transparent),
    radial-gradient(ellipse 8px 10px at 1192px 18px, #9fc0cd, transparent),
    linear-gradient(#dbd2d3, #eae2e2);
`;

const AppButton = styled.button`
  position: absolute;
  top: 10px;
  left: 0;
  z-index: 2;
  display: flex;
  align-items: center;
  justify-content: space-between;
  width: 41px;
  height: 41px;
  padding: 0 3px;
  border: 1px solid #333;
  background: linear-gradient(#ececec, #7c7c7c);
`;

const QuickAccess = styled.div`
  display: flex;
  align-items: center;
  height: 23px;
  padding-left: 5px;
  border: 1px solid #777;
  border-bottom: 0;
  background: linear-gradient(#a9a9a9, #838383);
`;

const OverflowButton = styled.button`
  display: flex;
  flex-direction: column;
  align-items: center;
  justify-content: center;
  gap: 1px;
  width: 17px;
  height: 22px;
`;

const Bar = styled.span`
  width: 8px;
  height: 1px;
  background: #000;
`;

const WindowTitle = styled.div`
  display: flex;
  flex: 1;
  justify-content: center;
  gap: 14px;
  padding-bottom: 7px;
  font-size: 13px;
  line-height: 18px;
  white-space: nowrap;
`;

const InfoCenter = styled.div`
  display: flex;
  align-items: center;
  height: 23px;
  margin-right: 183px;
  border: 1px solid #777;
  border-bottom: 0;
  background: linear-gradient(#a9a9a9, #838383);
`;

const SearchArrow = styled.button`
  display: flex;
  align-items: center;
  justify-content: center;
  width: 13px;
`;

const SearchBox = styled.input`
  width: 179px;
  height: 21px;
  padding: 3px 3px 0;
  border: 0;
  background: #f7f7f7;
  font-style: italic;
`;

const SignIn = styled.button`
  display: flex;
  align-items: center;
  gap: 4px;
  width: 108px;
  padding-left: 4px;
  color: #fff;
`;

const InfoDivider = styled.span`
  width: 1px;
  height: 18px;
  margin: 0 4px 0 6px;
  background: #b5b5b5;
`;

const WindowButtons = styled.div`
  position: absolute;
  top: 0;
  right: 4px;
  display: flex;
  height: 29px;
  border: 1px solid #8d8888;
  border-top: 0;
  border-radius: 0 0 5px 5px;
  background: rgba(255, 255, 255, 0.35);
`;

const WindowButton = styled.button`
  display: flex;
  align-items: center;
  justify-content: center;
  width: ${({ $w }) => $w}px;

  & + & {
    border-left: 1px solid #8d8888;
  }
`;

const MenuBar = styled.nav`
  display: flex;
  align-items: center;
  flex-shrink: 0;
  gap: 22px;
  height: 21px;
  padding-left: 55px;
  background: linear-gradient(#8f8f8f, #4c4c4c);
`;

const MenuItem = styled.button`
  color: #f2f2f2;
  font-size: 12px;
`;

const ToolArea = styled.div`
  display: flex;
  flex-direction: column;
  flex-shrink: 0;
  gap: 5px;
  padding: 1px 0 6px;
`;

const ToolRow = styled.div`
  display: flex;
  gap: 2px;
`;

const Toolbar = styled.div`
  display: flex;
  align-items: center;
  flex-shrink: 0;
  flex-grow: ${({ $grow }) => ($grow ? 1 : 0)};
  height: 22px;
  background: #ededed;
`;

const Grip = styled.span`
  flex-shrink: 0;
  align-self: stretch;
  width: 9px;
  border: 2px solid #6b6b6b;
  background: repeating-linear-gradient(#222 0 1px, #8a8a8a 1px 2px);
`;

const LeadSpace = styled.span`
  width: 10px;
`;

const LayerMarks = styled.span`
  display: flex;
  align-items: center;
`;

const Swatch = styled.span`
  flex-shrink: 0;
  width: 10px;
  height: 10px;
  margin: 0 2px 0 1px;
  border: 1px solid #000;
  background: #f00;
`;

const LineSample = styled.span`
  flex-shrink: 0;
  width: ${({ $w }) => $w}px;
  height: 1px;
  margin-right: 3px;
  background: #000;
`;

const WeightSample = styled.span`
  width: 63px;
  height: 16px;
  margin: 0 5px 0 1px;
  background: #000;
`;

const Main = styled.main`
  display: flex;
  flex: 1;
  min-height: 0;
`;

const DockStrip = styled.aside`
  display: flex;
  align-items: center;
  justify-content: center;
  width: 26px;
  background: #a0a0a0;
`;

const DockTitle = styled.span`
  writing-mode: vertical-rl;
  transform: rotate(180deg);
  color: #fff;
  font-size: 12px;
`;

const PaletteFrame = styled.aside`
  display: flex;
  flex-shrink: 0;
  width: 364px;
  padding: 1px 1px 1px 0;
  border: 1px solid #4d4d4d;
  border-right-width: 2px;
  background: #cdcdcd;
`;

const PaletteSpine = styled.div`
  display: flex;
  flex-direction: column;
  flex-shrink: 0;
  align-items: center;
  width: 23px;
`;

const SpineButton = styled.button`
  display: flex;
  align-items: center;
  justify-content: center;
  width: 18px;
  height: 18px;
`;

const SpineTitle = styled.span`
  margin: auto 0 9px;
  writing-mode: vertical-rl;
  transform: rotate(180deg);
  font-size: 12px;
`;

const PaletteBody = styled.div`
  flex: 1;
  min-width: 0;
  padding: 12px 12px 0 19px;
  border: 1px solid #666;
  border-radius: 4px;
  background: #f0f0f0;
`;

const PalettePick = styled.div`
  display: flex;
  gap: 3px;
  margin: 0 0 6px 2px;
`;

const PickGroup = styled.div`
  display: flex;
  border: 1px solid #8a8a8a;
`;

const PickButton = styled.button`
  display: flex;
  align-items: center;
  justify-content: center;
  width: 25px;
  height: 22px;

  & + & {
    border-left: 1px solid #8a8a8a;
  }
`;

const Section = styled.section`
  margin-bottom: 3px;
`;

const SectionHead = styled.button`
  display: flex;
  align-items: center;
  justify-content: space-between;
  width: 100%;
  height: 20px;
  padding: 0 9px 0 4px;
  border: 1px solid #808080;
  background: linear-gradient(#b0b0b0, #989898);
  font-weight: 700;
`;

const PropTable = styled.table`
  width: calc(100% - 17px);
  margin-left: 17px;
  border-collapse: separate;
  border-spacing: 0;
  border-left: 1px solid #8a8a8a;
  table-layout: fixed;
`;

const PropName = styled.th`
  width: 132px;
  height: 19px;
  padding: 0 4px;
  border-right: 1px solid #8a8a8a;
  border-bottom: 1px solid #8a8a8a;
  font-weight: 400;
  text-align: left;
`;

const PropValue = styled.td`
  height: 19px;
  padding: 0 2px;
  border-right: 1px solid #8a8a8a;
  border-bottom: 1px solid #8a8a8a;
  background: ${({ $locked }) => ($locked ? "#f0f0f0" : "#fff")};
`;

const ValueLine = styled.span`
  display: flex;
  align-items: center;
  height: 18px;

  & > ${Swatch} {
    margin-right: 6px;
  }
  & > ${LineSample} {
    margin: 0 5px 0 3px;
  }
`;

const Workspace = styled.div`
  display: flex;
  flex: 1;
  flex-direction: column;
  min-width: 0;
  border-top: 1px solid #999;
`;

const DrawingArea = styled.div`
  display: flex;
  flex: 1;
  min-height: 0;
  background: #e9eaec;
`;

const ModelPane = styled.div`
  width: 243px;
  overflow: hidden;
  background: #000;
`;

const PaperPane = styled.div`
  flex: 1;
  min-width: 0;
  padding: 13px 0 9px;
`;

const PaperSheet = styled.div`
  height: 100%;
  padding: 7px 0;
  border-top: 1px solid #000;
  border-bottom: 5px solid #000;
  background: #fff;
`;

const PaperMargin = styled.div`
  height: 433px;
  border: 1px solid #000;
  border-width: 1px 0;
`;

const ScrollStrip = styled.div`
  flex-shrink: 0;
  height: 17px;
  border-top: 1px solid #fff;
  border-bottom: 1px solid #fff;
  background: #ececec;
`;

const Splitter = styled.div`
  flex-shrink: 0;
  height: 5px;
  background: #666;
`;

const DockedTools = styled.div`
  display: flex;
  flex-direction: column;
  flex-shrink: 0;
  height: 35px;
  background: #f0f0f0;
`;

const DockedLine = styled.div`
  display: flex;
  gap: 6px;
  height: 11px;
  padding-top: 3px;
  border-bottom: 1px solid #8a8a8a;
`;

const LongRail = styled.span`
  flex: 1;
  border-top: 1px solid #8a8a8a;
  border-right: 1px solid #aaa;
`;

const ShortRail = styled.span`
  width: 124px;
  margin-top: 2px;
  border: 1px solid #aaa;
  background: #fff;
`;

const TrayIcons = styled.div`
  display: flex;
  flex: 1;
  align-items: flex-end;
  justify-content: flex-end;
  padding-right: 8px;
  border-top: 1px solid #fff;
`;

const CommandHistory = styled.div`
  display: flex;
  align-items: flex-end;
  flex-shrink: 0;
  height: 33px;
  overflow: hidden;
  background: #c8c8c8;
`;

const HistoryText = styled.span`
  margin-bottom: 2px;
  font-family: "DejaVu Sans Mono", "Liberation Mono", monospace;
  font-size: 11px;
`;

const CommandInput = styled.input`
  flex-shrink: 0;
  height: 24px;
  border: 1px solid #777;
  border-left: 0;
  background: #fff;
`;

const StatusRow = styled.footer`
  display: flex;
  flex-shrink: 0;
  height: 22px;
  border-top: 1px solid #000;
  background: linear-gradient(#8c8c8c, #6c6c6c);
`;

const Coordinates = styled.div`
  display: flex;
  align-items: center;
  width: 178px;
  padding-left: 12px;
  background: linear-gradient(#aaa, #7c7c7c);
`;

const StatusButton = styled.button`
  display: flex;
  align-items: center;
  justify-content: center;
  flex-shrink: 0;
  width: ${({ $w }) => $w || 22}px;
  border-left: 1px solid #555;
  background: ${({ $on, $sunk }) =>
    $on ? "linear-gradient(#e6fbfd, #a9d5e2)" : $sunk ? "#8c8c8c" : "linear-gradient(#d0d0d0, #a2a2a2)"};
`;

const Chevron = styled.svg`
  fill: #e5e5e5;
`;

const StatusSpace = styled.span`
  flex: 1;
`;

const StatusGap = styled.span`
  width: ${({ $w }) => $w}px;
`;

const DesktopEdge = styled.div`
  flex-shrink: 0;
  height: 2px;
  background: #dccfcf;
`;

const Dialog = styled.section`
  position: absolute;
  top: 42px;
  left: 800px;
  width: 740px;
  padding: 0 4px 4px;
  border: 1px solid #2c2628;
  background: linear-gradient(#b0a6a6 0, #a59d9d 40px, #f6e8e8 90px, #eadede 100%);
  box-shadow: 0 2px 5px rgba(0, 0, 0, 0.6);
`;

const DialogTitle = styled.div`
  position: relative;
  display: flex;
  align-items: center;
  gap: 5px;
  height: 38px;
  padding-left: 1px;
  font-size: 13px;

  &::before {
    content: "";
    position: absolute;
    top: 13px;
    left: 8px;
    width: 434px;
    height: 22px;
    background: linear-gradient(90deg, #eee3e3, #e3d8d8);
    filter: blur(3px);
  }

  & > * {
    position: relative;
  }
`;

const DialogBody = styled.div`
  padding: 10px 12px 6px;
  border: 1px solid #555;
  background: #f0f0f0;
`;

const Columns = styled.div`
  display: grid;
  grid-template-columns: 463px 1fr;
  gap: 7px;
`;

const Column = styled.div`
  min-width: 0;
`;

const Halves = styled.div`
  display: grid;
  grid-template-columns: 278px 1fr;
  gap: 7px;
`;

const Group = styled.fieldset`
  min-width: 0;
  height: ${({ $h }) => $h}px;
  margin: 0 0 ${({ $after }) => $after || 0}px;
  padding: 0 ${({ $tight }) => ($tight ? 4 : 10)}px;
  border: 1px solid #d0dce4;
  border-radius: 4px;
  white-space: nowrap;

  & > legend {
    height: 14px;
    margin-left: ${({ $tight }) => ($tight ? 0 : -6)}px;
    padding: 0 3px;
  }
`;

const SetupName = styled.div`
  display: grid;
  grid-template-columns: 72px 1fr auto;
  align-items: center;
  height: 44px;
  padding: 0 33px 0 2px;
`;

const PrinterLayout = styled.div`
  display: flex;
  gap: 7px;
`;

const PrinterFacts = styled.div`
  position: relative;
  z-index: 1;
  width: 326px;
`;

const PrinterRow = styled.div`
  display: grid;
  grid-template-columns: 72px 254px;
  align-items: center;
  height: ${({ $first }) => ($first ? 28 : 24)}px;
  margin-bottom: ${({ $first }) => ($first ? 5 : 0)}px;
`;

const PrinterSide = styled.div`
  display: flex;
  flex-direction: column;
  gap: 13px;
  width: 99px;
  padding-top: 2px;
`;

const PushButton = styled.button`
  width: ${({ $w }) => ($w ? `${$w}px` : "100%")};
  height: 23px;
  border: 1px solid ${({ $primary }) => ($primary ? "#0e7ca8" : "#a5a5a5")};
  background: ${({ $primary }) => ($primary ? "#f3f9fe" : "#f5f5f5")};
`;

const PreviewText = styled.text`
  font-family: "Liberation Mono", monospace;
  font-size: 11px;
`;

const PaperRow = styled.div`
  padding-top: 9px;
`;

const AreaStack = styled.div`
  display: flex;
  flex-direction: column;
  gap: 7px;
  padding-top: 7px;
`;

const OffsetGrid = styled.div`
  display: grid;
  grid-template-columns: 18px 60px 57px 1fr;
  gap: 10px 9px;
  align-items: center;
  padding-top: 2px;
`;

const TextBox = styled.input`
  width: ${({ $w }) => $w || 60}px;
  height: 23px;
  padding: 0 5px 3px;
  border: 1px solid #dde2e8;
  border-top-color: #abadb3;
  background: #fff;
`;

const ScaleStack = styled.div`
  display: flex;
  flex-direction: column;
  gap: 8px;
  padding-top: 11px;
`;

const ScaleRow = styled.div`
  display: flex;
  align-items: center;
  gap: 3px;
  min-height: 23px;
  padding-left: ${({ $inset }) => ($inset ? 34 : 0)}px;
`;

const ScaleCheck = styled.div`
  padding-left: 34px;
`;

const ScaleLabel = styled.span`
  width: 31px;
`;

const StyleStack = styled.div`
  display: flex;
  flex-direction: column;
  gap: 8px;
  padding: 12px 0 0 1px;
`;

const ShadeStack = styled.div`
  display: flex;
  flex-direction: column;
  gap: 19px;
  padding: 12px 0 0 1px;
`;

const Faded = styled.span`
  color: #a0a0a0;
`;

const OptionStack = styled.div`
  display: flex;
  flex-direction: column;
  gap: ${({ $wide }) => ($wide ? 11 : 8)}px;
  padding: 6px 0 0 1px;
`;

const CheckLabel = styled.label`
  display: flex;
  align-items: center;
  gap: 2px;
  height: 14px;
  color: ${({ $off }) => ($off ? "#838383" : "#111")};
`;

const CheckBox = styled.input`
  flex-shrink: 0;
  width: 11px;
  height: 11px;
  margin: 0;
  border: 1px solid #777;
  background: #e0e0e0;
  appearance: none;

  &:disabled {
    border-color: #b5b5b5;
    background: #f5f5f5;
  }

  &:checked::after {
    content: "";
    display: block;
    width: 4px;
    height: 8px;
    margin: -1px 0 0 3px;
    border: solid #0a7194;
    border-width: 0 2px 2px 0;
    transform: rotate(35deg);
  }
`;

const Radio = styled(CheckBox)`
  border-radius: 50%;

  &:checked {
    background: #0a7194;
    box-shadow: inset 0 0 0 1px #e8e8e8;
  }

  &:checked::after {
    display: none;
  }
`;

const DialogFooter = styled.div`
  display: flex;
  align-items: center;
  gap: 333px;
  padding-top: 12px;
`;

const FooterActions = styled.div`
  display: flex;
  gap: 21px;
`;

const CompareLine = styled.div`
  position: absolute;
  top: 0;
  bottom: 0;
  left: 632px;
  width: 3px;
  background: #0f0;
`;
